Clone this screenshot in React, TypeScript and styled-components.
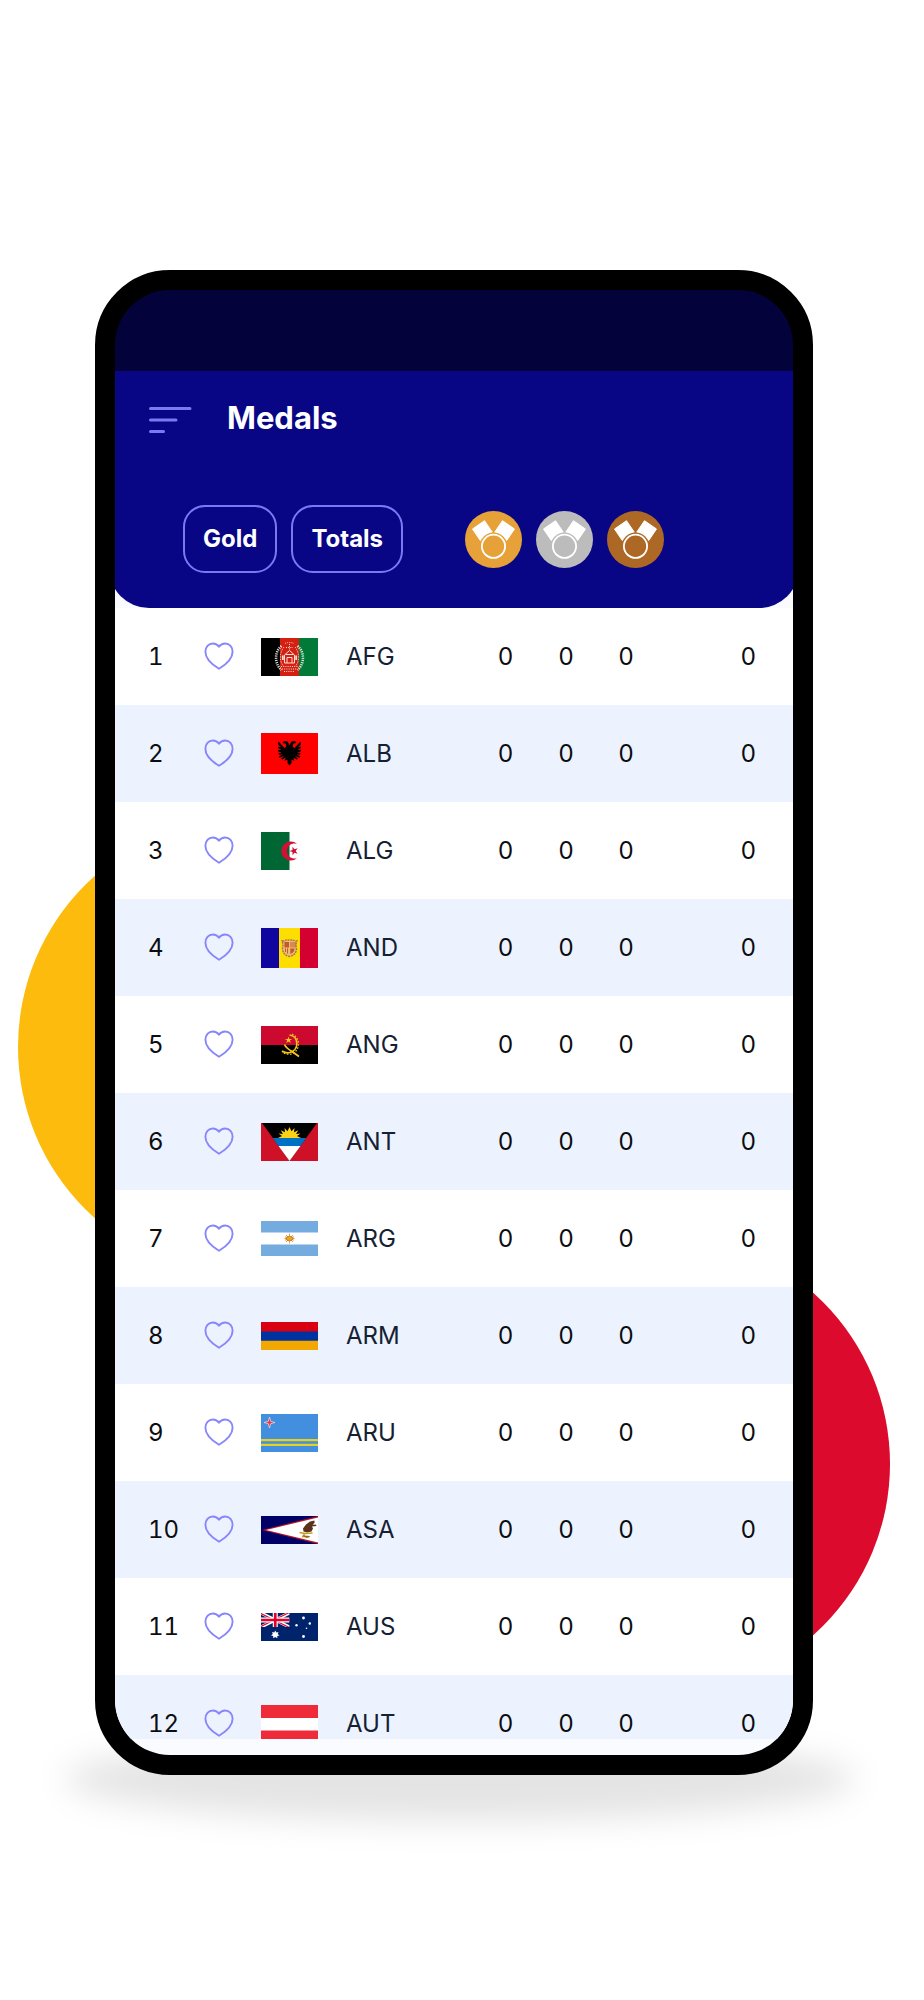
import React from "react";
import styled, { createGlobalStyle } from "styled-components";

const color = {
  frame: "#000000",
  statusBar: "#03023a",
  header: "#080685",
  accent: "#7b79f2",
  heart: "#8886fb",
  surface: "#fafbff",
  rowOdd: "#ffffff",
  rowEven: "#ecf3fe",
  digit: "#0c0d10",
  code: "#152033",
};

const GlobalStyle = createGlobalStyle`
  *, *::before, *::after { box-sizing: border-box; }
  body {
    margin: 0;
    background: #ffffff;
    font-family: Inter, "Liberation Sans", sans-serif;
  }
`;

const Page = styled.main`
  padding: 270px 111px 225px 95px;
  overflow: hidden;
`;

const Stage = styled.div`
  position: relative;
  isolation: isolate;
`;

const Disc = styled.span<{ $side: "left" | "right"; $top: number; $fill: string }>`
  position: absolute;
  z-index: -1;
  top: ${(p) => p.$top}px;
  ${(p) => p.$side}: -77px;
  width: 458px;
  height: 458px;
  border-radius: 50%;
  background: ${(p) => p.$fill};
`;

const GroundShadow = styled.span`
  position: absolute;
  z-index: -1;
  left: -30px;
  right: -42px;
  bottom: -46px;
  height: 84px;
  border-radius: 50%;
  background: rgba(0, 0, 0, 0.105);
  filter: blur(16px);
`;

const Phone = styled.section`
  border: 20px solid ${color.frame};
  border-radius: 75px;
  background: ${color.frame};
`;

const Screen = styled.div`
  overflow: hidden;
  padding-bottom: 16px;
  border-radius: 55px;
  background: linear-gradient(${color.statusBar} 81px, ${color.surface} 81px);
`;

const StatusBar = styled.div`
  height: 81px;
`;

const Header = styled.header`
  margin: 0 -6px;
  padding: 28px 40px 35px;
  border-radius: 0 0 40px 40px;
  background: ${color.header};
`;

const TitleBar = styled.div`
  display: flex;
  align-items: center;
  gap: 35px;
  height: 42px;
`;

const MenuButton = styled.button`
  display: flex;
  padding: 0;
  border: 0;
  background: none;
  cursor: pointer;
`;

const Title = styled.h1`
  margin: 0;
  padding-bottom: 4px;
  color: #ffffff;
  font-size: 31px;
  font-weight: 700;
  line-height: 36px;
`;

const Toolbar = styled.div`
  display: flex;
  align-items: center;
  gap: 62px;
  margin-top: 64px;
  padding-left: 34px;
`;

const Filters = styled.div`
  display: flex;
  gap: 14px;
`;

const FilterButton = styled.button`
  height: 68px;
  padding: 0 18px;
  border: 2px solid ${color.accent};
  border-radius: 22px;
  background: none;
  color: #ffffff;
  font: 700 24px/28px Inter, "Liberation Sans", sans-serif;
  cursor: pointer;
`;

const MedalKey = styled.div`
  display: flex;
  gap: 14px;
`;

const List = styled.div`
  height: 1131px;
  overflow: hidden;
`;

const Table = styled.table`
  width: 100%;
  table-layout: fixed;
  border-collapse: collapse;
`;

const Row = styled.tr`
  height: 97px;
  background: ${color.rowOdd};
  &:nth-child(even) {
    background: ${color.rowEven};
  }
`;

const Cell = styled.td`
  padding: 0;
  color: ${color.digit};
  font-size: 24px;
  line-height: 28px;
  text-align: left;
  vertical-align: middle;
`;

const RankCell = styled(Cell)`
  padding-left: 33px;
  font-variant-numeric: tabular-nums;
`;

const CodeCell = styled(Cell).attrs({ as: "th", scope: "row" })`
  color: ${color.code};
  font-weight: 400;
`;

const CountCell = styled(Cell)`
  text-align: center;
`;

const TotalCell = styled(Cell)`
  padding-right: 37px;
  text-align: right;
`;

const HeartButton = styled.button`
  display: flex;
  padding: 0 0 1px;
  border: 0;
  background: none;
  cursor: pointer;
`;

const FlagBox = styled.svg`
  display: block;
`;

function Flag({ height, name, children }: { height: number; name: string; children: React.ReactNode }) {
  return (
    <FlagBox width="57" height={height} viewBox={`0 0 57 ${height}`} role="img" aria-label={name}>
      {children}
    </FlagBox>
  );
}

function Heart() {
  return (
    <svg width="30" height="28" viewBox="0 0 30 28" fill="none" stroke={color.heart} strokeWidth="1.9" strokeLinejoin="round">
      <path d="M15 4.800C13.200 2.200 11.300 1.500 8.900 1.500 4.400 1.500 1.400 5 1.400 9.800 1.400 16 7.500 22.300 15 26.800 22.500 22.300 28.600 16 28.600 9.800 28.600 5 25.600 1.500 21.100 1.500 18.700 1.500 16.800 2.200 15 4.800Z" />
    </svg>
  );
}

function Medal({ fill, label }: { fill: string; label: string }) {
  return (
    <svg width="57" height="57" viewBox="0 0 57 57" role="img" aria-label={label}>
      <circle cx="28.5" cy="28.5" r="28.5" fill={fill} />
      <g fill="#fff" stroke="#fff" strokeWidth="1" strokeLinejoin="round">
        <path d="M7.5 18 19.5 9.7 27.3 21.2 15.3 29.5Z" />
        <path d="M49.5 18 37.5 9.7 29.7 21.2 41.7 29.5Z" />
      </g>
      <circle cx="28.5" cy="35.3" r="13.8" fill={fill} />
      <circle cx="28.5" cy="35.3" r="11.6" fill={fill} stroke="#fff" strokeWidth="1.8" />
    </svg>
  );
}

const flags: Record<string, React.ReactNode> = {
  AFG: (
    <Flag height={38} name="Afghanistan">
      <path fill="#000" d="M0 0H19V38H0Z" />
      <path fill="#d42010" d="M19 0H38V38H19Z" />
      <path fill="#007a36" d="M38 0H57V38H38Z" />
      <g fill="none" stroke="#fff" opacity=".85">
        <path strokeWidth="2.6" strokeDasharray="1.2 1" d="M20.500 8C13 14 13.500 26 20.500 32M36.500 8C44 14 43.500 26 36.500 32" />
        <path strokeWidth=".8" strokeDasharray="1.500 1" d="M23 9C18 15 18.500 24 22.500 28M34 9C39 15 38.500 24 34.500 28" />
        <path strokeWidth="1" d="M23.500 25V17L28.500 12.500 33.500 17V25ZM26 25V19.500H31V25M24.500 16.500H32.500" />
        <path strokeWidth="1" strokeDasharray="1 1.200" d="M24 5.500Q28.500 3.500 33 5.500M25 9.500H32M28.500 6V12M20 28.500H37M21 31H36M23 33.500H34" />
        <path strokeWidth="1.800" d="M21.800 17.500V22M35.200 17.500V22" />
      </g>
    </Flag>
  ),
  ALB: (
    <Flag height={41} name="Albania">
      <path fill="#f00" d="M0 0H57V41H0Z" />
      <path
        fill="#000"
        d="M28.500 12 26.500 8.500 23 8 21.500 10 24.500 10.500 25.500 13.500 23.500 15 18.500 9.500 17 9 17.500 12 20 14 17.500 13.500 17 15 20.500 17 17 16.800 17.300 18.500 21 19.500 17.300 20 18 21.800 21.500 21.500 18 23.300 18.500 24.800 23 23 20 25.800 21.500 26.500 24.800 24.500 23.500 27.500 26.500 27 26.500 30 28.500 32.500 30.500 30 30.500 27 33.500 27.500 32.200 24.500 35.500 26.500 37 25.800 34 23 38.500 24.800 39 23.300 35.500 21.500 39 21.800 39.700 20 36 19.500 39.700 18.500 40 16.800 36.500 17 40 15 39.500 13.500 37 14 39.500 12 40 9 38.500 9.500 33.500 15 31.500 13.500 32.500 10.500 35.500 10 34 8 30.500 8.500Z"
      />
    </Flag>
  ),
  ALG: (
    <Flag height={38} name="Algeria">
      <path fill="#fff" d="M0 0H57V38H0Z" />
      <path fill="#006633" d="M0 0H28.500V38H0Z" />
      <path fill="#d21034" d="M36 11.800A9.500 9.500 0 1 0 36 26.200 7.600 7.600 0 1 1 36 11.800Z" />
      <path fill="#d21034" d="M28.500 19 31.500 18 31.500 14.700 33.500 17.300 36.600 16.300 34.700 19 36.600 21.700 33.500 20.700 31.500 23.300 31.500 20Z" />
    </Flag>
  ),
  AND: (
    <Flag height={40} name="Andorra">
      <path fill="#10069f" d="M0 0H18V40H0Z" />
      <path fill="#fedd00" d="M18 0H39V40H18Z" />
      <path fill="#d50032" d="M39 0H57V40H39Z" />
      <path fill="#e9bd76" stroke="#a87a45" strokeWidth="1.500" strokeDasharray="2 .8" d="M21 13Q24 13 25 12H32Q33 13 36 13 34.500 16 35.500 20 35.500 27 28.500 28.500 21.500 27 21.500 20 22.500 16 21 13Z" />
      <path fill="#c8552b" d="M23.500 14H28V19.500H23.500ZM29.300 20.500H33.500Q33.500 24.500 29.300 26Z" />
      <path stroke="#c8552b" strokeWidth="1" d="M30 14V19.500M32 14V19.500M34 14V19.500M24.500 20.500V24M26.500 20.500V25.500" />
    </Flag>
  ),
  ANG: (
    <Flag height={38} name="Angola">
      <path fill="#cc092f" d="M0 0H57V19H0Z" />
      <path fill="#000" d="M0 19H57V38H0Z" />
      <g fill="none" stroke="#f5c71e">
        <path strokeWidth="1.700" d="M28.500 9C38 10 38.500 24 29 26.500Q25 27.500 21 25" />
        <path strokeWidth="1.200" strokeDasharray="1.600 1.600" d="M31 8C40 12 39.500 24 31 28Q26 29 21 26.500" />
        <path strokeWidth="1.800" d="M23.500 18.500Q25 22 31 25.500L38 30.500" />
      </g>
      <path fill="#f5c71e" d="M27.500 10.500 28.300 13 31 13 28.900 14.600 29.700 17 27.500 15.500 25.300 17 26.100 14.600 24 13 26.700 13Z" />
    </Flag>
  ),
  ANT: (
    <Flag height={38} name="Antigua and Barbuda">
      <path fill="#ce1126" d="M0 0H57V38H0Z" />
      <path fill="#000" d="M1 0H56L28.500 38Z" />
      <path fill="#fcd116" d="M17 15 21 13 17.500 10.500 22 11 19.700 7.200 24 9.200 23.500 5 26.500 8.300 28.500 4 30.500 8.300 33.500 5 33 9.200 37.300 7.200 35 11 39.500 10.500 36 13 40 15Z" />
      <path fill="#0072c6" d="M11.800 15H45.200L39.500 23H17.500Z" />
      <path fill="#fff" d="M17.500 23H39.500L28.500 38Z" />
    </Flag>
  ),
  ARG: (
    <Flag height={35} name="Argentina">
      <path fill="#fff" d="M0 0H57V35H0Z" />
      <path fill="#74acdf" d="M0 0H57V11.500H0ZM0 23.500H57V35H0Z" />
      <path stroke="#dc9b48" strokeWidth=".9" d="M23.500 17.500H33.500M28.500 12.500V22.500M25 14 32 21M32 14 25 21M24 15.800 33 19.200M33 15.800 24 19.200" />
      <ellipse cx="28.500" cy="17.500" rx="3.400" ry="2.300" fill="#f0a21b" stroke="#b77b30" strokeWidth=".8" />
    </Flag>
  ),
  ARM: (
    <Flag height={28} name="Armenia">
      <path fill="#d90012" d="M0 0H57V10H0Z" />
      <path fill="#0033a0" d="M0 9.500H57V19H0Z" />
      <path fill="#f2a800" d="M0 18.700H57V28H0Z" />
    </Flag>
  ),
  ARU: (
    <Flag height={38} name="Aruba">
      <path fill="#418fde" d="M0 0H57V38H0Z" />
      <path fill="#e8d020" d="M0 25H57V27.300H0ZM0 29.700H57V32H0Z" />
      <path fill="#e63c4a" stroke="#f2dfe8" strokeWidth=".7" d="M8.500 3 9.700 7.300 14 8.500 9.700 9.700 8.500 14 7.300 9.700 3 8.500 7.300 7.300Z" />
    </Flag>
  ),
  ASA: (
    <Flag height={28} name="American Samoa">
      <path fill="#000066" d="M0 0H57V28H0Z" />
      <path fill="#bd1021" d="M1 14 57 0V28Z" />
      <path fill="#fff" d="M5 14 57 1.500V26.500Z" />
      <path fill="#5a3219" d="M53.500 4.500 49 5.500 45 8.500 42 12.500 42.500 15.500 46 16.500 50.500 15.500 52 12.500 51 10.500 55.500 10 55 8.800 51.500 8.500 53.500 7Z" />
      <path fill="none" stroke="#c59a25" strokeWidth="1.400" d="M38.500 16.500 44 17.500 51.500 17M43 17V20.500M41 20.500 48.500 20.800" />
      <path fill="#8d6b20" d="M41 19.500 49.500 20 46 22Z" />
    </Flag>
  ),
  AUS: (
    <Flag height={28} name="Australia">
      <path fill="#00246b" d="M0 0H57V28H0Z" />
      <svg width="28.500" height="14" viewBox="0 0 28.5 14">
        <path stroke="#fff" strokeWidth="3.200" d="M0 0 28.500 14M28.500 0 0 14" />
        <path stroke="#e4002b" strokeWidth="1.100" d="M0 .6 28.500 14.600M28.500 -.6 0 13.400" />
        <path stroke="#fff" strokeWidth="5" d="M14.250 0V14M0 7H28.500" />
        <path stroke="#e4002b" strokeWidth="2.700" d="M14.250 0V14M0 7H28.500" />
      </svg>
      <path fill="#fff" d="M14.250 17.500 15.300 19.600 17.500 18.900 16.700 21 18.500 22.400 16.300 23 16.300 25.300 14.250 24 12.200 25.300 12.200 23 10 22.400 11.800 21 11 18.900 13.200 19.600Z" />
      <g fill="#fff">
        <circle cx="42.500" cy="5" r="1.400" />
        <circle cx="35.500" cy="12.300" r="1.200" />
        <circle cx="48.800" cy="10.500" r="1.200" />
        <circle cx="42.500" cy="23.500" r="1.400" />
        <circle cx="45.500" cy="15.300" r=".8" />
      </g>
    </Flag>
  ),
  AUT: (
    <Flag height={38} name="Austria">
      <path fill="#ef2b3a" d="M0 0H57V38H0Z" />
      <path fill="#fff" d="M0 13H57V25.500H0Z" />
    </Flag>
  ),
};

const teams = Object.keys(flags).map((code, index) => ({
  rank: index + 1,
  code,
  gold: 0,
  silver: 0,
  bronze: 0,
}));

export default function App() {
  return (
    <Page>
      <GlobalStyle />
      <Stage>
        <Disc $side="left" $top={548} $fill="#fdbb0d" />
        <Disc $side="right" $top={965} $fill="#dc0a2d" />
        <GroundShadow />
        <Phone>
          <Screen>
            <StatusBar />
            <Header>
              <TitleBar>
                <MenuButton type="button" aria-label="Menu">
                  <svg width="43" height="28" viewBox="0 0 43 28" stroke={color.accent} strokeWidth="3" strokeLinecap="round">
                    <path d="M1.500 2.500H41M1.500 14H27M1.500 25.500H14.500" />
                  </svg>
                </MenuButton>
                <Title>Medals</Title>
              </TitleBar>
              <Toolbar>
                <Filters>
                  <FilterButton type="button">Gold</FilterButton>
                  <FilterButton type="button">Totals</FilterButton>
                </Filters>
                <MedalKey>
                  <Medal fill="#e6a138" label="Gold medals" />
                  <Medal fill="#bcbcbc" label="Silver medals" />
                  <Medal fill="#ad6826" label="Bronze medals" />
                </MedalKey>
              </Toolbar>
            </Header>
            <List>
              <Table aria-label="Medals by team">
                <colgroup>
                  <col width="89" />
                  <col width="57" />
                  <col width="85" />
                  <col />
                  <col width="61" />
                  <col width="60" />
                  <col width="60" />
                  <col width="137" />
                </colgroup>
                <tbody>
                  {teams.map((team) => (
                    <Row key={team.code}>
                      <RankCell>{team.rank}</RankCell>
                      <Cell>
                        <HeartButton type="button" aria-label={`Follow ${team.code}`}>
                          <Heart />
                        </HeartButton>
                      </Cell>
                      <Cell>{flags[team.code]}</Cell>
                      <CodeCell>{team.code}</CodeCell>
                      <CountCell>{team.gold}</CountCell>
                      <CountCell>{team.silver}</CountCell>
                      <CountCell>{team.bronze}</CountCell>
                      <TotalCell>{team.gold + team.silver + team.bronze}</TotalCell>
                    </Row>
                  ))}
                </tbody>
              </Table>
            </List>
          </Screen>
        </Phone>
      </Stage>
    </Page>
  );
}
